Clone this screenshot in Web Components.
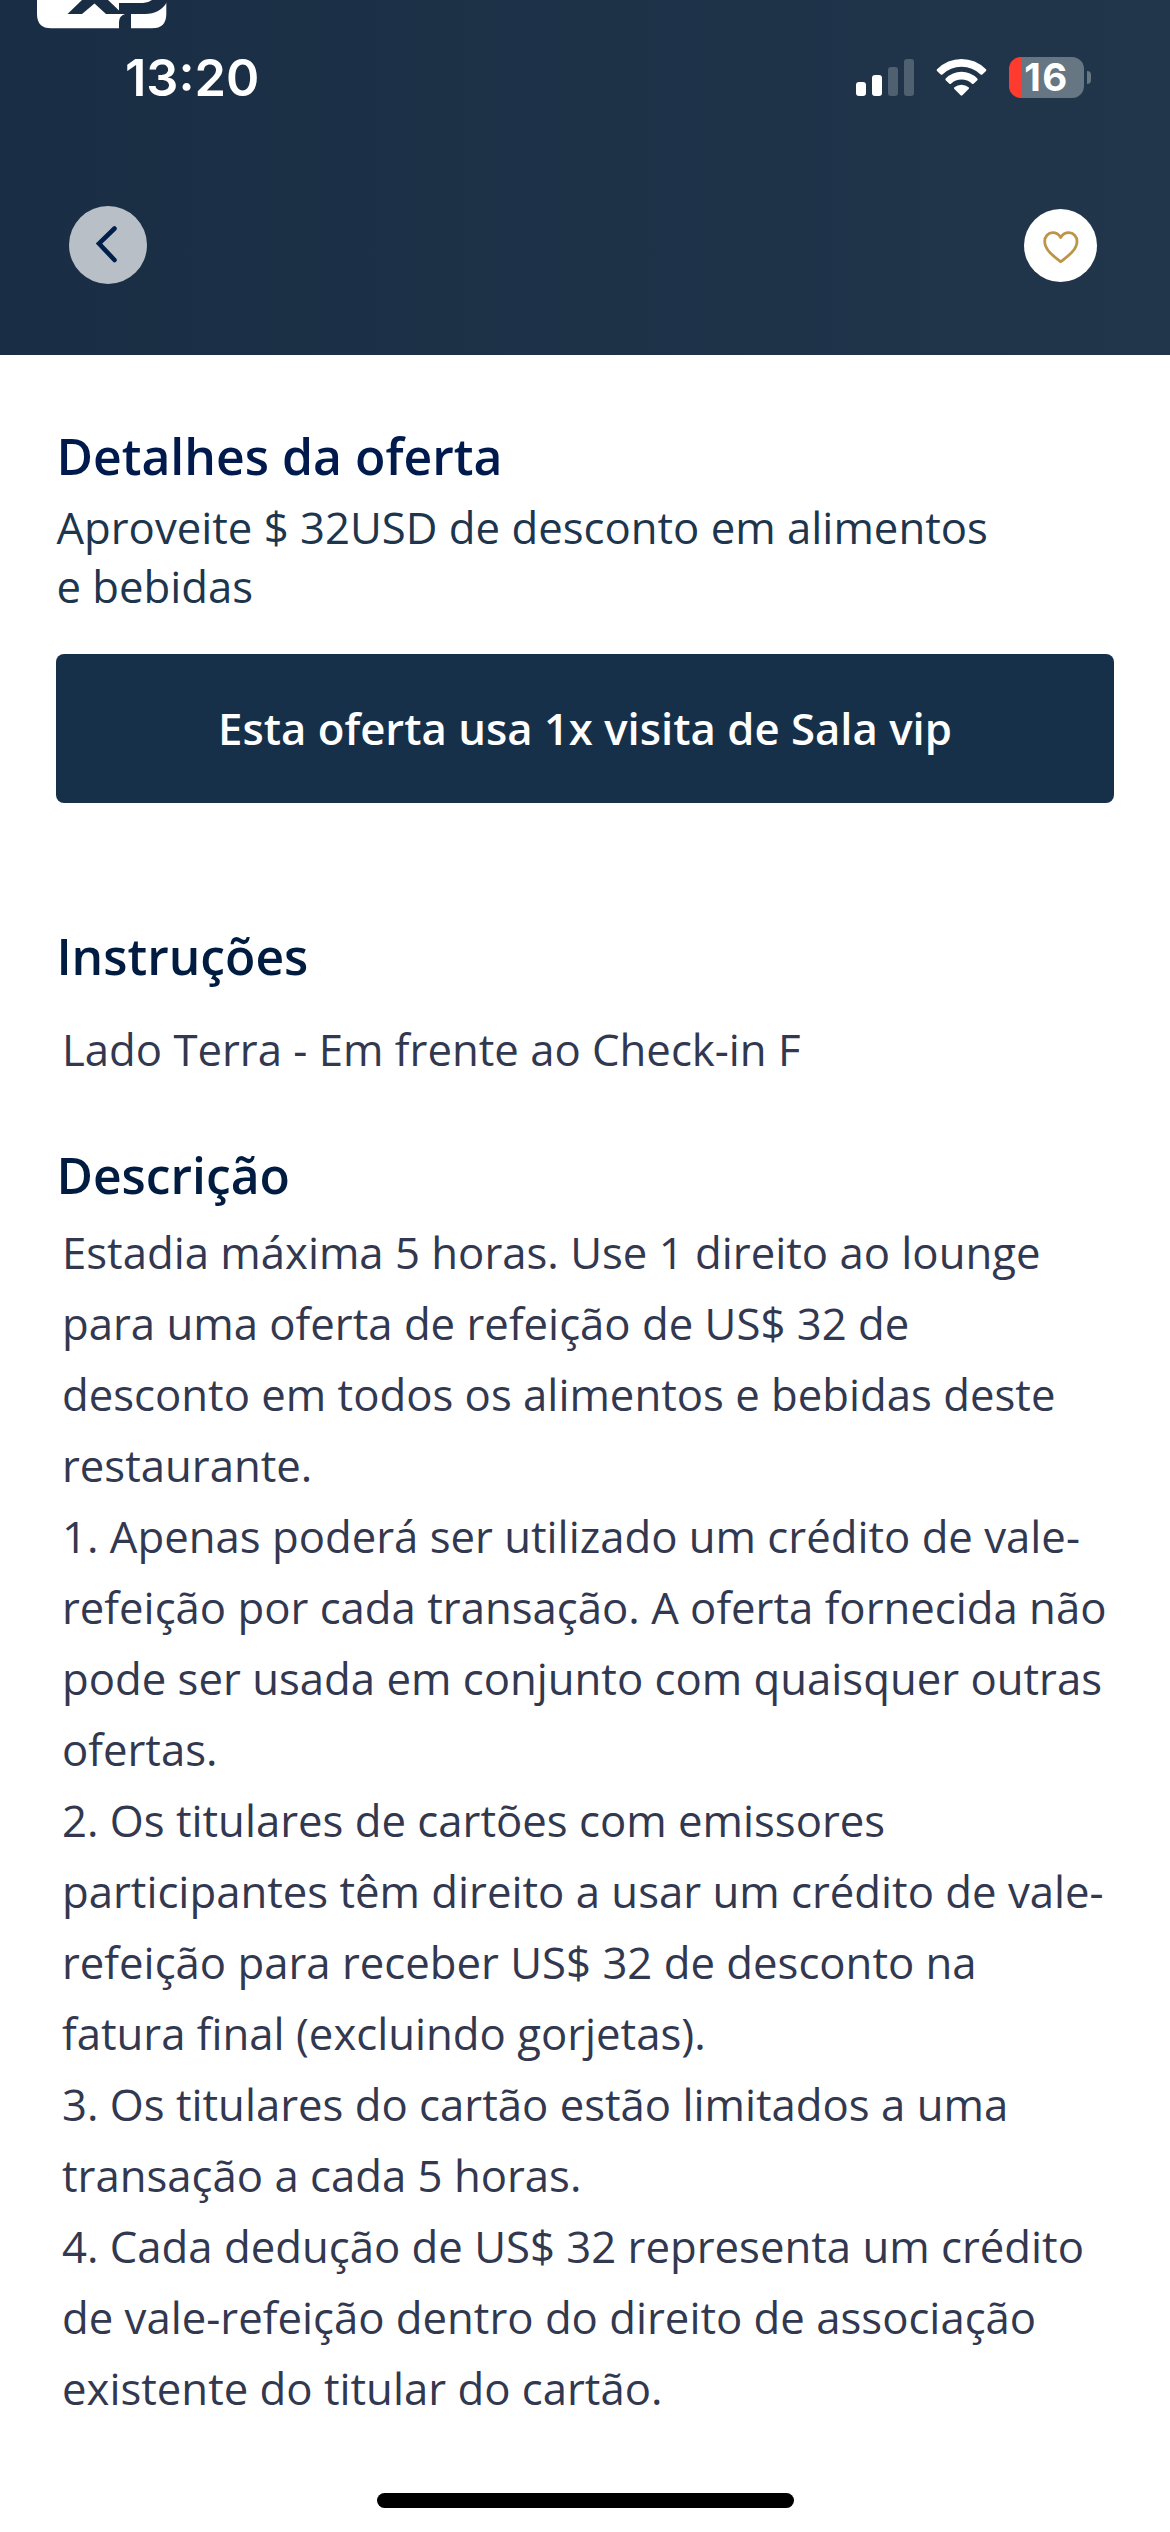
<!DOCTYPE html>
<html lang="pt-BR">
<head>
<meta charset="utf-8">
<title>Detalhes da oferta</title>
<style>
  body {
    margin: 0;
    background: #fff;
    font-family: "Open Sans", "Noto Sans", sans-serif;
  }
</style>
</head>
<body>
<offer-page>
  <app-header slot="header">
    <status-bar slot="status" time="13:20" battery="16"></status-bar>
    <round-button slot="start" kind="back"></round-button>
    <round-button slot="end" kind="favorite"></round-button>
  </app-header>

  <offer-summary>
    <span slot="title">Detalhes da oferta</span>
    Aproveite $ 32USD de desconto em alimentos e bebidas
  </offer-summary>
  <offer-banner>Esta oferta usa 1x visita de Sala vip</offer-banner>
  <text-section class="instructions">
    <span slot="title">Instruções</span>
    <p>Lado Terra - Em frente ao Check-in F</p>
  </text-section>
  <text-section class="description">
    <span slot="title">Descrição</span>
    <p>Estadia máxima 5 horas. Use 1 direito ao lounge para uma oferta de refeição de US$ 32 de desconto em todos os alimentos e bebidas deste restaurante.</p>
    <p>1. Apenas poderá ser utilizado um crédito de vale-refeição por cada transação. A oferta fornecida não pode ser usada em conjunto com quaisquer outras ofertas.</p>
    <p>2. Os titulares de cartões com emissores participantes têm direito a usar um crédito de vale-refeição para receber US$ 32 de desconto na fatura final (excluindo gorjetas).</p>
    <p>3. Os titulares do cartão estão limitados a uma transação a cada 5 horas.</p>
    <p>4. Cada dedução de US$ 32 representa um crédito de vale-refeição dentro do direito de associação existente do titular do cartão.</p>
  </text-section>

  <home-indicator slot="footer"></home-indicator>
</offer-page>

<script>
const define = (name, html, setup) => {
  const template = document.createElement('template')
  template.innerHTML = html

  customElements.define(name, class extends HTMLElement {
    constructor() {
      super()

      this.attachShadow({ mode: 'open' })
      this.shadowRoot.appendChild(template.content.cloneNode(true))
    }

    connectedCallback() {
      if (setup) setup(this, this.shadowRoot)
    }
  })
}

define('offer-page', `
<style>
  :host {
    display: flex;
    flex-direction: column;
    width: 1170px;
    height: 2532px;
    overflow: hidden;
    background: #fff;
  }
  main {
    flex: 1;
    display: flex;
    flex-direction: column;
    padding: 67px 56.4px 0;
  }
</style>
<slot name="header"></slot>
<main><slot></slot></main>
<slot name="footer"></slot>`)

define('app-header', `
<style>
  :host {
    display: block;
    position: relative;
    box-sizing: border-box;
    height: 355px;
    background: linear-gradient(90deg, #192d44, #21364b);
  }
  /* partner logo scrolled under the status bar */
  .logo {
    position: absolute;
    left: 37px;
    top: 0;
  }
  nav {
    display: flex;
    justify-content: space-between;
    align-items: center;
    padding: 50px 73px 0 69px;
  }
</style>
<svg class="logo" width="130" height="29" viewBox="37 0 130 29">
  <path fill="#fff" d="M37 0V14Q37 28.3 51 28.3H152Q166.3 28.3 166.3 14V0Z"/>
  <path fill="#192d44" d="M82 0L67.5 14H82L94.5 3.5L106 14H125Q119 16 119 22V29H131V14H145Q160 14 167 2V0H152Q148 3 143 3H119V10.5L108 0Z"/>
</svg>
<slot name="status"></slot>
<nav>
  <slot name="start"></slot>
  <slot name="end"></slot>
</nav>`)

define('status-bar', `
<style>
  :host {
    display: flex;
    justify-content: space-between;
    height: 156px;
    box-sizing: border-box;
    padding: 48px 79px 0 125px;
    color: #fff;
    font-family: Inter, Roboto, sans-serif;
  }
  .time {
    font-size: 50.5px;
    font-weight: 600;
    line-height: 60px;
  }
  .icons {
    display: flex;
    align-items: center;
    height: 59px;
  }
  .wifi {
    margin: 0 22px;
  }
  .battery {
    display: flex;
    align-items: center;
    gap: 3px;
  }
  .cell {
    width: 75px;
    height: 41px;
    border-radius: 12px;
    box-sizing: border-box;
    padding: 0 14px;
    text-align: center;
    background: linear-gradient(90deg, #ff3b30 12.7px, #677683 12.7px);
    font-size: 38.5px;
    font-weight: 700;
    line-height: 41px;
    letter-spacing: 1.5px;
  }
  .cap {
    width: 4px;
    height: 13px;
    border-radius: 0 5px 5px 0;
    background: #677683;
  }
</style>
<span class="time"></span>
<div class="icons">
  <svg width="58" height="37" viewBox="0 0 58 37" fill="#fff">
    <rect y="23" width="10" height="14" rx="3"/>
    <rect x="16" y="16" width="10" height="21" rx="3"/>
    <g fill="#4f6070">
      <rect x="32" y="8" width="10" height="29" rx="3"/>
      <rect x="48" width="10" height="37" rx="3"/>
    </g>
  </svg>
  <svg class="wifi" width="51" height="37" viewBox="0 0 51 37" fill="#fff">
    <path d="M1 10.2Q11.500 0 25.500 0T50 10.200Q50.800 11 50 11.900L46.300 15.500Q45.500 16.200 44.600 15.500Q36.500 7.800 25.500 7.800T6.400 15.500Q5.500 16.200 4.700 15.500L1 11.900Q.2 11 1 10.200Z"/>
    <path d="M9.700 19.500Q16.500 12.800 25.500 12.800T41.300 19.500Q42.100 20.300 41.300 21.200L37.600 24.700Q36.800 25.400 36 24.700Q31.500 20.600 25.500 20.600T15 24.700Q14.200 25.400 13.400 24.700L9.700 21.200Q8.900 20.300 9.700 19.500Z"/>
    <path d="M18.400 28.300Q21.500 25.700 25.500 25.700T32.600 28.300Q33.400 29.100 32.600 30L26.400 36.300Q25.500 37.100 24.600 36.300L18.400 30Q17.600 29.100 18.400 28.300Z"/>
  </svg>
  <div class="battery">
    <div class="cell"></div>
    <div class="cap"></div>
  </div>
</div>`, (el, root) => {
  root.querySelector('.time').textContent = el.getAttribute('time')
  root.querySelector('.cell').textContent = el.getAttribute('battery')
})

const icons = {
  back: '<svg width="78" height="78" viewBox="0 0 78 78" fill="none" stroke="#00204a" stroke-width="4.6" stroke-linecap="round"><path d="M45.500 22.500L30 37.500L45.500 54"/></svg>',
  favorite: '<svg width="73" height="73" viewBox="0 0 73 73" fill="none" stroke="#bd9548" stroke-width="2.800" stroke-linejoin="round"><path d="M36.700 28.500C34.500 25 31.500 23.700 28.700 23.700C24 23.700 20.700 27.500 20.700 32.500C20.700 41 30 47.500 36.700 52.700C43.400 47.500 53 41 53 32.500C53 27.500 49.500 23.700 44.800 23.700C41.800 23.700 38.900 25 36.700 28.500Z"/></svg>'
}

define('round-button', `
<style>
  :host {
    display: block;
  }
  button {
    display: block;
    padding: 0;
    border: 0;
    border-radius: 50%;
    background: #fff;
  }
  :host([kind="back"]) button {
    background: #b9bfc7;
  }
  svg {
    display: block;
  }
</style>
<button></button>`, (el, root) => {
  root.querySelector('button').innerHTML = icons[el.getAttribute('kind')]
})

define('offer-summary', `
<style>
  :host {
    display: block;
    color: #1d354d;
  }
  h2 {
    margin: 0 0 8px;
    font-size: 49.9px;
    font-weight: 600;
    line-height: 68px;
    color: #001a4d;
  }
  p {
    margin: 0;
    width: 950px;
    font-size: 43.7px;
    line-height: 59px;
  }
</style>
<h2><slot name="title"></slot></h2>
<p><slot></slot></p>`)

define('offer-banner', `
<style>
  :host {
    display: flex;
    justify-content: center;
    align-items: center;
    height: 148.6px;
    margin-top: 38px;
    border-radius: 8px;
    background: #17304a;
    color: #fff;
    font-size: 43.7px;
    font-weight: 600;
    line-height: 60px;
  }
</style>
<slot></slot>`)

define('text-section', `
<style>
  :host {
    display: block;
    margin-top: 56px;
    --gap: 8px;
  }
  :host(.instructions) {
    margin-top: 119px;
    --gap: 24px;
  }
  h2 {
    margin: 0 0 var(--gap);
    font-size: 49.8px;
    font-weight: 600;
    line-height: 68px;
    color: #001c41;
  }
  .text {
    width: 1046px;
    padding-left: 5.6px;
    font-size: 43.7px;
    line-height: 71.03px;
    color: #32384f;
  }
  ::slotted(p) {
    margin: 0;
  }
</style>
<h2><slot name="title"></slot></h2>
<div class="text"><slot></slot></div>`)

define('home-indicator', `
<style>
  :host {
    display: block;
    width: 417px;
    height: 15px;
    margin: 0 auto 24px;
    border-radius: 8px;
    background: #000;
  }
</style>`)
</script>
</body>
</html>
